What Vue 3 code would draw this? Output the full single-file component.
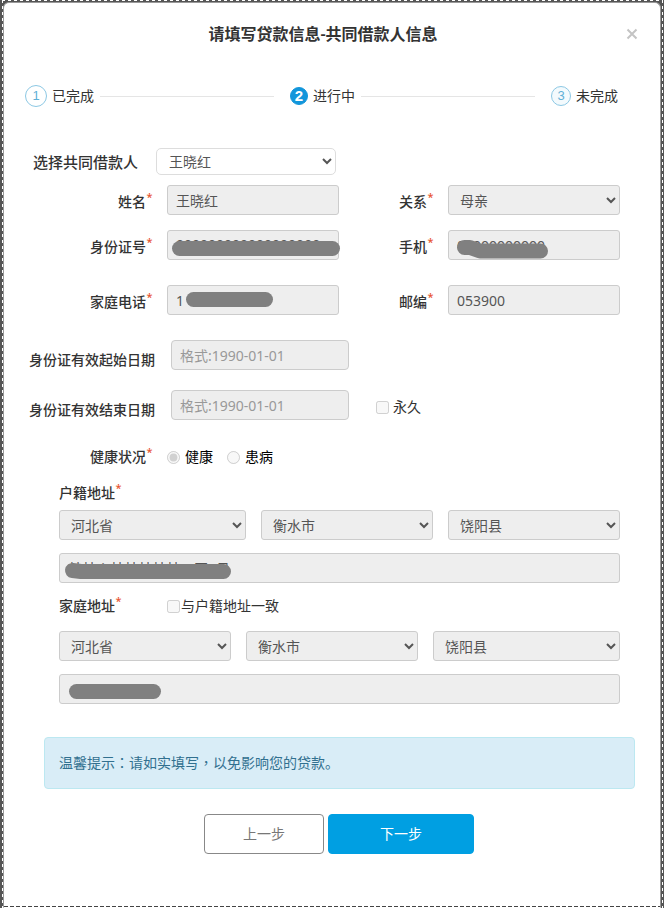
<script setup>
import { ref, reactive } from 'vue'

const borrower = ref('王晓红')
const form = reactive({
  name: '王晓红',
  relation: '母亲',
  idNumber: '000000000000000000',
  mobile: '00000000000',
  homePhone: '1',
  postcode: '053900',
  validFrom: '',
  validTo: '',
  forever: false,
  health: 'good',
  sameAddress: false,
  registeredDetail: '某某乡某某某某某一区6号',
  homeDetail: '丶',
})
const registered = ['河北省', '衡水市', '饶阳县']
const home = ['河北省', '衡水市', '饶阳县']
const regionNames = ['省', '市', '县']
</script>

<template>
  <div class="page">
    <div class="frame">
      <main class="dialog">
        <header class="header">
          <h1>请填写贷款信息-共同借款人信息</h1>
          <button class="close" type="button" aria-label="关闭">
            <svg viewBox="0 0 12 12" width="12" height="12"><path d="M1.5 1.5L10.5 10.5M10.5 1.5L1.5 10.5" /></svg>
          </button>
        </header>

        <ol class="steps">
          <li class="step"><span class="dot done">1</span>已完成</li>
          <li class="line" aria-hidden="true"></li>
          <li class="step"><span class="dot active">2</span>进行中</li>
          <li class="line" aria-hidden="true"></li>
          <li class="step"><span class="dot todo">3</span>未完成</li>
        </ol>

        <form class="form" @submit.prevent>
          <div class="picker">
            <label for="borrower">选择共同借款人</label>
            <select id="borrower" v-model="borrower"><option>王晓红</option></select>
          </div>

          <div class="fields">
            <label for="name">姓名<sup>*</sup></label>
            <input id="name" v-model="form.name" class="control" type="text" disabled />
            <label for="relation">关系<sup>*</sup></label>
            <select id="relation" v-model="form.relation" class="control" disabled><option>母亲</option></select>

            <label for="idNumber">身份证号<sup>*</sup></label>
            <div class="masked">
              <input id="idNumber" v-model="form.idNumber" class="control raised" type="text" disabled />
              <svg class="mask"><path d="M12.5 18.5H165.5" /></svg>
            </div>
            <label for="mobile">手机<sup>*</sup></label>
            <div class="masked">
              <input id="mobile" v-model="form.mobile" class="control" type="text" disabled />
              <svg class="mask"><path d="M16.5 17.5H22L32 21H92.5" /></svg>
            </div>
          </div>

          <div class="fields spaced">
            <label for="homePhone">家庭电话<sup>*</sup></label>
            <div class="masked">
              <input id="homePhone" v-model="form.homePhone" class="control" type="text" disabled />
              <svg class="mask"><path d="M26.5 14.5H98.5" /></svg>
            </div>
            <label for="postcode">邮编<sup>*</sup></label>
            <input id="postcode" v-model="form.postcode" class="control" type="text" disabled />
          </div>

          <div class="dates">
            <label for="validFrom">身份证有效起始日期</label>
            <input id="validFrom" v-model="form.validFrom" class="control" type="text" placeholder="格式:1990-01-01" disabled />
            <span></span>
            <label for="validTo">身份证有效结束日期</label>
            <input id="validTo" v-model="form.validTo" class="control" type="text" placeholder="格式:1990-01-01" disabled />
            <label class="choice forever"><input v-model="form.forever" type="checkbox" disabled /><span>永久</span></label>
          </div>

          <div class="health" role="radiogroup" aria-labelledby="health-label">
            <span id="health-label" class="caption">健康状况<sup>*</sup></span>
            <label class="choice"><input v-model="form.health" type="radio" name="health" value="good" disabled /><span>健康</span></label>
            <label class="choice"><input v-model="form.health" type="radio" name="health" value="ill" disabled /><span>患病</span></label>
          </div>

          <section class="address">
            <div class="address-head"><label for="registeredDetail">户籍地址<sup>*</sup></label></div>
            <div class="regions registered">
              <select v-for="(r, i) in registered" :key="i" class="control" :aria-label="'户籍地址' + regionNames[i]" disabled>
                <option>{{ r }}</option>
              </select>
            </div>
            <div class="masked">
              <input id="registeredDetail" v-model="form.registeredDetail" class="control" type="text" disabled />
              <svg class="mask"><path d="M13.5 17.5L22 18.5H164.5" /></svg>
            </div>
          </section>

          <section class="address">
            <div class="address-head">
              <label for="homeDetail">家庭地址<sup>*</sup></label>
              <label class="choice tight"><input v-model="form.sameAddress" type="checkbox" disabled /><span>与户籍地址一致</span></label>
            </div>
            <div class="regions current">
              <select v-for="(r, i) in home" :key="i" class="control" :aria-label="'家庭地址' + regionNames[i]" disabled>
                <option>{{ r }}</option>
              </select>
            </div>
            <div class="masked">
              <input id="homeDetail" v-model="form.homeDetail" class="control" type="text" disabled />
              <svg class="mask"><path d="M17.5 17.5H94.5" /></svg>
            </div>
          </section>

          <p class="notice">温馨提示<span class="centered">：</span>请如实填写<span class="centered">，</span>以免影响您的贷款。</p>

          <div class="actions">
            <button class="prev" type="button">上一步</button>
            <button class="next" type="submit">下一步</button>
          </div>
        </form>
      </main>
    </div>
  </div>
</template>

<style>
body {
  background: #555;
}
</style>

<style scoped>
* {
  box-sizing: border-box;
}
.page {
  display: flex;
  min-height: 100vh;
  padding: 0 1px 0 2px;
  background: #555;
  color: #333;
  font: 14px/20px "Noto Sans", "Noto Sans CJK SC", sans-serif;
}
.frame {
  display: flex;
  flex: 1;
  min-width: 0;
  padding: 2px 2px 0 1px;
  background:
    repeating-linear-gradient(90deg, #fff 0 3px, #555 3px 6px) top / 100% 1px no-repeat,
    repeating-linear-gradient(#fff 0 3px, #555 3px 6px) left / 1px 100% no-repeat,
    repeating-linear-gradient(#fff 0 3px, #555 3px 6px) right / 1px 100% no-repeat,
    #555;
}
.dialog {
  flex: 1;
  min-width: 0;
  border: 1px solid #999;
  border-bottom-color: #fff;
  border-radius: 6px 6px 0 0;
  background: repeating-linear-gradient(90deg, #444 0 4px, #fff 4px 6px) bottom / 100% 1px no-repeat, #fff;
}
button,
input,
select {
  margin: 0;
  font: inherit;
}
.header {
  display: flex;
  align-items: center;
  height: 62px;
  padding: 0 18px 0 20px;
}
h1 {
  flex: 1;
  margin: 0;
  font-size: 16px;
  font-weight: 600;
  line-height: 24px;
  text-align: center;
}
.close {
  display: flex;
  align-items: center;
  justify-content: center;
  width: 20px;
  height: 20px;
  padding: 0;
  border: 0;
  background: none;
}
.close path {
  stroke: #c4c4c4;
  stroke-width: 2;
}
.steps {
  display: flex;
  align-items: center;
  height: 62px;
  margin: 0;
  padding: 0 42px 0 21px;
  list-style: none;
}
.step {
  display: flex;
  align-items: center;
  gap: 5px;
}
.line {
  flex: 1;
  height: 1px;
  margin: 0 16px 0 6px;
  background: #e5e5e5;
}
.dot {
  display: flex;
  align-items: center;
  justify-content: center;
  width: 20px;
  height: 20px;
  border: 1px solid #8cc8e4;
  border-radius: 50%;
  color: #5fb0d6;
  font: 13px/18px "Liberation Sans", sans-serif;
}
.done {
  width: 22px;
  height: 22px;
}
.active {
  width: 18px;
  height: 18px;
  border-color: #1296db;
  background: #1296db;
  color: #fff;
  font-size: 15px;
  font-weight: 700;
}
.todo {
  background: #f3fafd;
}
.form {
  padding: 21px 40px 50px 20px;
}
label,
.caption {
  font-weight: 500;
}
sup {
  display: inline-block;
  width: 7px;
  color: #e8532f;
  font-size: 11px;
  line-height: 0;
  text-align: center;
  vertical-align: 6px;
}
.picker {
  display: flex;
  align-items: center;
  gap: 18px;
  padding-left: 9px;
}
.picker label {
  font-size: 15px;
}
.picker select {
  width: 180px;
  height: 27px;
  padding: 0 0 0 8px;
  border: 1px solid #ddd;
  border-radius: 5px;
  background-color: #fff;
  color: #555;
}
.fields {
  display: grid;
  grid-template-columns: 143px 1fr 109px 1fr;
  row-gap: 15px;
  margin-top: 10px;
}
.fields.spaced {
  margin-top: 25px;
}
.fields > label {
  padding: 7px 14px 0 0;
  text-align: right;
}
.control {
  display: block;
  width: 100%;
  min-width: 0;
  height: 30px;
  padding: 0 8px;
  border: 1px solid #ccc;
  border-radius: 3px;
  background-color: #eee;
  color: #555;
  opacity: 1;
}
select.control {
  padding: 0 0 0 7px;
}
.control.raised {
  padding-bottom: 2px;
}
.control::placeholder {
  color: #999;
}
.masked {
  position: relative;
}
.mask {
  position: absolute;
  inset: 0;
  width: 100%;
  height: 100%;
  overflow: visible;
  fill: none;
  stroke: #808080;
  stroke-width: 15px;
  stroke-linecap: round;
  stroke-linejoin: round;
}
.dates {
  display: grid;
  grid-template-columns: 147px 178fr 271fr;
  row-gap: 20px;
  margin-top: 25px;
}
.dates > label {
  padding: 10px 16px 0 0;
  text-align: right;
}
.dates .control {
  border-radius: 4px;
}
.choice {
  display: flex;
  align-items: center;
  gap: 4px;
  font-weight: 400;
}
.choice input {
  flex: none;
  width: 13px;
  height: 13px;
}
.dates > .forever {
  padding: 4px 0 0 27px;
}
.health {
  display: flex;
  align-items: center;
  gap: 14px;
  margin-top: 27px;
}
.health .caption {
  width: 129px;
  text-align: right;
}
.health .choice {
  gap: 5px;
  color: #000;
}
.address {
  margin: 16px 0 0 35px;
}
.address + .address {
  margin-top: 13px;
}
.address-head {
  display: flex;
  gap: 45px;
  height: 27px;
}
.address + .address .address-head {
  height: 35px;
}
.address-head label {
  height: 20px;
}
.choice.tight {
  gap: 1px;
}
.regions {
  display: grid;
  gap: 15px;
  margin-bottom: 13px;
}
.registered {
  grid-template-columns: 187fr 172fr 172fr;
}
.current {
  grid-template-columns: 172fr 172fr 187fr;
}
.notice {
  margin: 33px -15px 25px 20px;
  padding: 15px 14px;
  border: 1px solid #bce8f1;
  border-radius: 4px;
  background: #d9edf7;
  color: #31708f;
}
.centered {
  font-family: "Noto Sans CJK TC", sans-serif;
  line-height: 1;
}
.actions {
  display: flex;
  justify-content: center;
  gap: 4px;
  padding-left: 34px;
}
.actions button {
  height: 40px;
  padding: 0;
  border: 1px solid #888;
  border-radius: 4px;
  background: #fff;
  color: #777;
}
.actions .prev {
  width: 120px;
}
.actions .next {
  width: 146px;
  border-color: #009fe2;
  background: #009fe2;
  color: #fff;
}
</style>
